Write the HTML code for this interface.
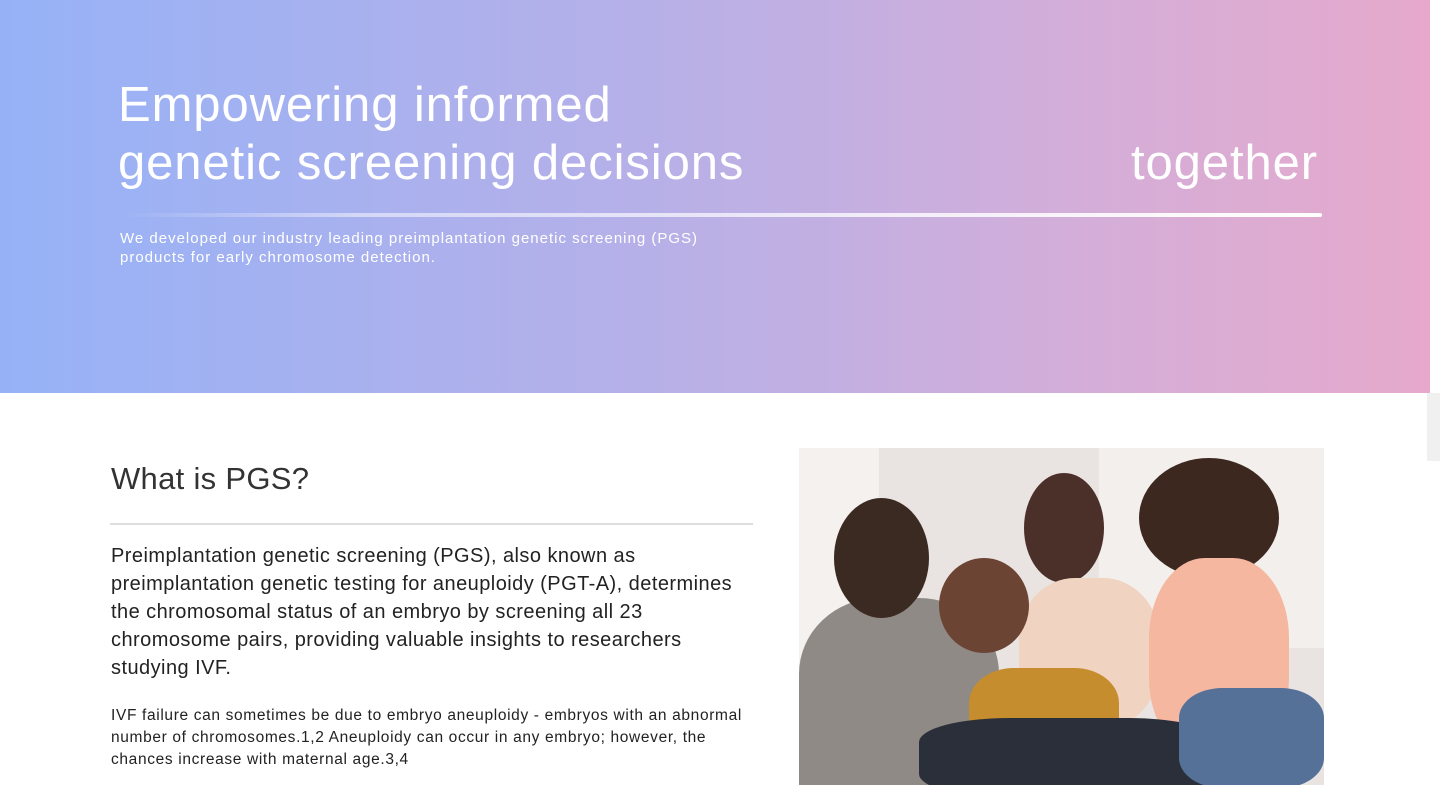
<!DOCTYPE html>
<html><head><style>
*{margin:0;padding:0;box-sizing:border-box}
body{width:1440px;height:810px;overflow:hidden;background:#fff;font-family:"Liberation Sans",sans-serif;position:relative}
.hero{position:absolute;left:0;top:0;width:1430px;height:393px;background:linear-gradient(90deg,#96b2f7 0%,#b6b0e8 45%,#d3aed9 75%,#e6a9cc 100%)}
.h1{position:absolute;left:118px;top:76px;color:#fff;font-size:49px;line-height:58px;font-weight:300;letter-spacing:0.9px}
.tog{position:absolute;right:112px;top:134px;color:#fff;font-size:49px;line-height:58px;font-weight:300;letter-spacing:0.9px}
.line{position:absolute;left:118px;top:213px;width:1204px;height:4px;border-radius:2px;background:linear-gradient(90deg,rgba(255,255,255,0),rgba(255,255,255,.5) 20%,#fff)}
.sub{position:absolute;left:120px;top:229px;color:#fff;font-size:15px;line-height:19px;letter-spacing:1.0px}
.sb{position:absolute;left:1427px;top:393px;width:13px;height:68px;background:#f0f0f0}
h2{position:absolute;left:111px;top:461px;font-size:31px;font-weight:normal;color:#333;letter-spacing:0.3px}
.rule{position:absolute;left:110px;top:523px;width:643px;height:2px;background:#ddd}
.p1{position:absolute;left:111px;top:542px;width:660px;font-size:20px;line-height:28px;color:#222;letter-spacing:0.45px}
.p2{position:absolute;left:111px;top:705px;width:680px;font-size:15.5px;line-height:22px;color:#222;letter-spacing:0.65px}
.photo{position:absolute;left:799px;top:448px;width:525px;height:337px;overflow:hidden;background:#e9e4e1}
.photo div{position:absolute;border-radius:50%}
</style></head><body>
<div class="hero">
<div class="h1">Empowering informed<br>genetic screening decisions</div>
<div class="tog">together</div>
<div class="line"></div>
<div class="sub">We developed our industry leading preimplantation genetic screening (PGS)<br>products for early chromosome detection.</div>
</div>
<div class="sb"></div>
<h2>What is PGS?</h2>
<div class="rule"></div>
<div class="p1">Preimplantation genetic screening (PGS), also known as<br>preimplantation genetic testing for aneuploidy (PGT-A), determines<br>the chromosomal status of an embryo by screening all 23<br>chromosome pairs, providing valuable insights to researchers<br>studying IVF.</div>
<div class="p2">IVF failure can sometimes be due to embryo aneuploidy - embryos with an abnormal<br>number of chromosomes.1,2 Aneuploidy can occur in any embryo; however, the<br>chances increase with maternal age.3,4</div>
<div class="photo">
<div style="left:0;top:0;width:80px;height:337px;border-radius:0;background:#f4f1ee"></div>
<div style="left:300px;top:0;width:225px;height:200px;border-radius:0;background:#f2efec"></div>
<div style="left:0;top:150px;width:200px;height:190px;border-radius:40% 40% 0 0;background:#8f8a85"></div>
<div style="left:35px;top:50px;width:95px;height:120px;background:#3b2a22"></div>
<div style="left:225px;top:25px;width:80px;height:110px;background:#4a3028"></div>
<div style="left:220px;top:130px;width:140px;height:150px;border-radius:40%;background:#f0d3c0"></div>
<div style="left:140px;top:110px;width:90px;height:95px;background:#6b4433"></div>
<div style="left:170px;top:220px;width:150px;height:117px;border-radius:30%;background:#c58d2e"></div>
<div style="left:340px;top:10px;width:140px;height:120px;background:#3d2820"></div>
<div style="left:350px;top:110px;width:140px;height:200px;border-radius:40%;background:#f6b7a0"></div>
<div style="left:120px;top:270px;width:300px;height:80px;border-radius:30%;background:#2b2f3a"></div>
<div style="left:380px;top:240px;width:145px;height:100px;border-radius:30%;background:#557197"></div>
</div>
</body></html>
